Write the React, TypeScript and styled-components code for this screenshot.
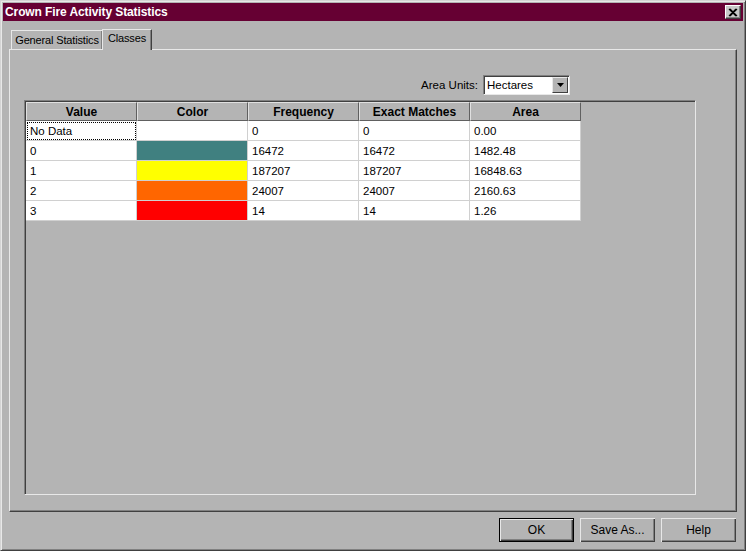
import React from "react";
import styled, { createGlobalStyle } from "styled-components";

const Global = createGlobalStyle`
  html, body { margin: 0; padding: 0; background: #b4b4b4; }
  body { font-family: "Liberation Sans", Arial, sans-serif; font-size: 11px; }
  * { box-sizing: border-box; }
`;

const Window = styled.div`
  width: 746px;
  height: 551px;
  background: #b4b4b4;
  border-top: 1px solid #d4d4d4;
  border-left: 1px solid #d4d4d4;
  border-right: 1px solid #404040;
  border-bottom: 1px solid #404040;
  box-shadow: inset 1px 1px 0 #e8e8e8, inset -1px -1px 0 #808080;
  padding: 2px;
  display: flex;
  flex-direction: column;
  font-family: "Liberation Sans", Arial, sans-serif;
  font-size: 11px;
  color: #000;
`;

const TitleBar = styled.div`
  height: 18px;
  background: #660033;
  display: flex;
  align-items: center;
  justify-content: space-between;
  padding: 0 2px 0 2px;
`;

const Title = styled.span`
  color: #fff;
  font-weight: bold;
  font-size: 12px;
  letter-spacing: -0.1px;
  font-family: "Liberation Sans", Arial, sans-serif;
`;

const CloseBtn = styled.div`
  width: 16px;
  height: 14px;
  background: #c8c8c8;
  border-top: 1px solid #ffffff;
  border-left: 1px solid #ffffff;
  border-right: 1px solid #404040;
  border-bottom: 1px solid #404040;
  box-shadow: inset -1px -1px 0 #808080;
  display: flex;
  align-items: center;
  justify-content: center;
`;

const Body = styled.div`
  flex: 1;
  display: flex;
  flex-direction: column;
  padding: 8px 6px 0 6px;
`;

const TabRow = styled.div`
  display: flex;
  align-items: flex-end;
  height: 20px;
  padding-left: 2px;
  position: relative;
  z-index: 1;
`;

const Tab = styled.div<{ $active?: boolean; $w: number }>`
  width: ${(p) => p.$w}px;
  height: ${(p) => (p.$active ? "21px" : "19px")};
  margin-left: ${(p) => (p.$active ? "-1px" : "0")};
  margin-bottom: ${(p) => (p.$active ? "-1px" : "0")};
  background: #b4b4b4;
  border-top: 1px solid #e8e8e8;
  border-left: 1px solid #e8e8e8;
  border-right: 1px solid #404040;
  box-shadow: inset -1px 0 0 #808080;
  display: flex;
  justify-content: center;
  align-items: ${(p) => (p.$active ? "flex-start" : "center")};
  padding-top: ${(p) => (p.$active ? "2px" : "0")};
  font-size: 11px;
  letter-spacing: -0.15px;
  white-space: nowrap;
  color: #000;
`;

const Panel = styled.div`
  width: 728px;
  height: 463px;
  border-top: 1px solid #e8e8e8;
  border-left: 1px solid #e8e8e8;
  border-right: 1px solid #404040;
  border-bottom: 1px solid #404040;
  box-shadow: inset -1px -1px 0 #808080;
  display: flex;
  flex-direction: column;
  padding: 25px 0 0 14px;
`;

const UnitsRow = styled.div`
  display: flex;
  align-items: center;
  justify-content: flex-end;
  gap: 5px;
  width: 546px;
  height: 20px;
`;

const Label = styled.span`
  font-size: 11.5px;
`;

const Combo = styled.div`
  width: 87px;
  height: 20px;
  background: #fff;
  border-top: 1px solid #808080;
  border-left: 1px solid #808080;
  border-right: 1px solid #e8e8e8;
  border-bottom: 1px solid #e8e8e8;
  box-shadow: inset 1px 1px 0 #404040;
  display: flex;
  align-items: center;
  padding-left: 3px;
  justify-content: space-between;
`;

const ComboText = styled.span`
  font-size: 11.5px;
`;

const ComboArrow = styled.div`
  width: 16px;
  height: 16px;
  margin-right: 1px;
  background: #b4b4b4;
  border-top: 1px solid #e8e8e8;
  border-left: 1px solid #e8e8e8;
  border-right: 1px solid #404040;
  border-bottom: 1px solid #404040;
  display: flex;
  align-items: center;
  justify-content: center;
`;

const GridFrame = styled.div`
  margin-top: 5px;
  width: 672px;
  height: 395px;
  border-top: 1px solid #808080;
  border-left: 1px solid #808080;
  border-right: 1px solid #e8e8e8;
  border-bottom: 1px solid #e8e8e8;
  box-shadow: inset 1px 1px 0 #404040;
  padding: 1px 0 0 1px;
`;

const Table = styled.div`
  display: grid;
  grid-template-columns: repeat(5, 111px);
  width: 555px;
`;

const HeadCell = styled.div`
  height: 19px;
  background: #b4b4b4;
  border-top: 1px solid #e0e0e0;
  border-left: 1px solid #e0e0e0;
  border-right: 1px solid #606060;
  border-bottom: 1px solid #606060;
  font-weight: bold;
  display: flex;
  align-items: center;
  justify-content: center;
  font-size: 12px;
`;

const Cell = styled.div<{ $bg?: string; $focus?: boolean }>`
  height: 20px;
  background: ${(p) => p.$bg || "#fff"};
  border-right: 1px solid #d0d0d0;
  border-bottom: 1px solid #d0d0d0;
  display: flex;
  align-items: center;
  padding-left: 4px;
  font-size: 11.5px;
  outline: ${(p) => (p.$focus ? "1px dotted #000" : "none")};
  outline-offset: -2px;
`;

const Footer = styled.div`
  display: flex;
  justify-content: flex-end;
  gap: 6px;
  padding-top: 6px;
  padding-right: 1px;
`;

const Button = styled.div<{ $default?: boolean }>`
  width: 75px;
  height: 24px;
  background: #b4b4b4;
  border: ${(p) => (p.$default ? "1px solid #000" : "none")};
  box-shadow: inset 1px 1px 0 #e8e8e8, inset -1px -1px 0 #404040, inset -2px -2px 0 #808080;
  display: flex;
  align-items: center;
  justify-content: center;
  font-size: 12px;
`;

const rows = [
  { v: "No Data", c: "#ffffff", f: "0", e: "0", a: "0.00", focus: true },
  { v: "0", c: "#408080", f: "16472", e: "16472", a: "1482.48" },
  { v: "1", c: "#ffff00", f: "187207", e: "187207", a: "16848.63" },
  { v: "2", c: "#ff6600", f: "24007", e: "24007", a: "2160.63" },
  { v: "3", c: "#ff0000", f: "14", e: "14", a: "1.26" },
];

export default function App() {
  return (
    <>
      <Global />
      <Window>
        <TitleBar>
          <Title>Crown Fire Activity Statistics</Title>
          <CloseBtn>
            <svg width="10" height="9" viewBox="0 0 10 9">
              <path d="M1 1 L8 8 M2 1 L9 8 M8 1 L1 8 M9 1 L2 8" stroke="#000" strokeWidth="1.2" />
            </svg>
          </CloseBtn>
        </TitleBar>
        <Body>
          <TabRow>
            <Tab $w={92}>General Statistics</Tab>
            <Tab $active $w={50}>Classes</Tab>
          </TabRow>
          <Panel>
            <UnitsRow>
              <Label>Area Units:</Label>
              <Combo>
                <ComboText>Hectares</ComboText>
                <ComboArrow>
                  <svg width="7" height="4" viewBox="0 0 7 4">
                    <path d="M0 0 H7 L3.5 4 Z" fill="#000" />
                  </svg>
                </ComboArrow>
              </Combo>
            </UnitsRow>
            <GridFrame>
              <Table>
                <HeadCell>Value</HeadCell>
                <HeadCell>Color</HeadCell>
                <HeadCell>Frequency</HeadCell>
                <HeadCell>Exact Matches</HeadCell>
                <HeadCell>Area</HeadCell>
                {rows.map((r) => (
                  <React.Fragment key={r.v}>
                    <Cell $focus={r.focus}>{r.v}</Cell>
                    <Cell $bg={r.c} />
                    <Cell>{r.f}</Cell>
                    <Cell>{r.e}</Cell>
                    <Cell>{r.a}</Cell>
                  </React.Fragment>
                ))}
              </Table>
            </GridFrame>
          </Panel>
          <Footer>
            <Button $default>OK</Button>
            <Button>Save As...</Button>
            <Button>Help</Button>
          </Footer>
        </Body>
      </Window>
    </>
  );
}
